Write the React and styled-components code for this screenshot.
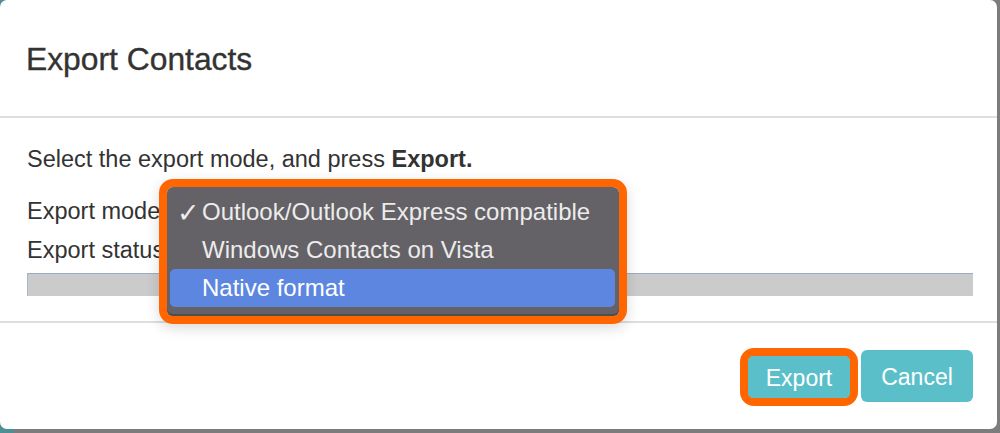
import React from "react";
import styled, { createGlobalStyle } from "styled-components";

const Global = createGlobalStyle`
  html, body { margin: 0; padding: 0; }
  body {
    width: 1000px;
    height: 433px;
    overflow: hidden;
    background: linear-gradient(to right, #4e8f96 0 14px, #7c7c7c 14px);
    font-family: "Liberation Sans", Arial, sans-serif;
  }
`;

const Dialog = styled.div`
  position: relative;
  width: 997px;
  height: 429px;
  background: #fff;
  border-radius: 7px;
  display: flex;
  flex-direction: column;
  color: #333;
`;

const Header = styled.div`
  height: 116px;
  padding: 0 26px;
  display: flex;
  align-items: center;
  border-bottom: 2px solid #dedede;
`;

const Title = styled.h1`
  margin: 3px 0 0;
  font-size: 31.8px;
  font-weight: 500;
  -webkit-text-stroke: 0.35px #333;
  color: #333;
`;

const Body = styled.div`
  padding: 26px 24px 25px 27px;
  border-bottom: 2px solid #dedede;
  display: flex;
  flex-direction: column;
`;

const Line = styled.div`
  font-size: 23.5px;
  line-height: 30px;
  margin-top: ${(p) => p.$gap || 0}px;
  white-space: nowrap;
`;

const Progress = styled.div`
  margin-top: 8px;
  height: 22px;
  background: #cbcbcb;
  border-top: 1px solid #9eabc6;
  border-left: 1px solid #aab6cc;
`;

const Footer = styled.div`
  flex: 1;
  display: flex;
  justify-content: flex-end;
  align-items: flex-start;
  gap: 3px;
  padding: 24px 24px 0 0;
`;

const Ring = styled.div`
  margin-top: 1px;
  border: 8px solid #ff6600;
  border-radius: 14px;
  display: flex;
`;

const Button = styled.button`
  height: ${(p) => (p.$inner ? 42 : 52)}px;
  width: ${(p) => p.$w}px;
  margin-top: ${(p) => (p.$inner ? 0 : 3)}px;
  background: #5bbfca;
  color: #fff;
  border: none;
  border-radius: ${(p) => (p.$inner ? 5 : 6)}px;
  font-family: "Liberation Sans", Arial, sans-serif;
  font-size: 23px;
  line-height: 1;
  padding: ${(p) => (p.$inner ? "3px 0 0" : "2px 0 0")};
  cursor: pointer;
`;

const MenuRing = styled.div`
  position: absolute;
  left: 159px;
  top: 179px;
  width: 452px;
  border: 8px solid #ff6600;
  border-radius: 14px;
  box-shadow: 0 4px 14px rgba(0, 0, 0, 0.15);
`;

const Menu = styled.div`
  background: #646266;
  border-radius: 6px;
  padding: 6px 4px 9px 3px;
  box-shadow: inset 0 -2px 0 #4f4d51;
`;

const Item = styled.div`
  height: 38px;
  display: flex;
  align-items: center;
  padding-left: 8px;
  border-radius: 5px;
  background: ${(p) => (p.$active ? "#5c86e0" : "transparent")};
  color: ${(p) => (p.$active ? "#ffffff" : "#ececec")};
  font-size: 24px;
  white-space: nowrap;
`;

const Check = styled.span`
  width: 24px;
  margin-left: -1px;
  margin-right: 1px;
  font-size: 27px;
  line-height: 1;
  font-family: "DejaVu Sans", sans-serif;
`;

export default function App() {
  return (
    <>
      <Global />
      <Dialog>
        <Header>
          <Title>Export Contacts</Title>
        </Header>
        <Body>
          <Line>
            Select the export mode, and press <b>Export.</b>
          </Line>
          <Line $gap={22}>Export mode</Line>
          <Line $gap={9}>Export status</Line>
          <Progress />
        </Body>
        <Footer>
          <Ring>
            <Button $inner $w={102}>Export</Button>
          </Ring>
          <Button $w={112}>Cancel</Button>
        </Footer>
        <MenuRing>
          <Menu>
            <Item>
              <Check>✓</Check>Outlook/Outlook Express compatible
            </Item>
            <Item>
              <Check />Windows Contacts on Vista
            </Item>
            <Item $active>
              <Check />Native format
            </Item>
          </Menu>
        </MenuRing>
      </Dialog>
    </>
  );
}
